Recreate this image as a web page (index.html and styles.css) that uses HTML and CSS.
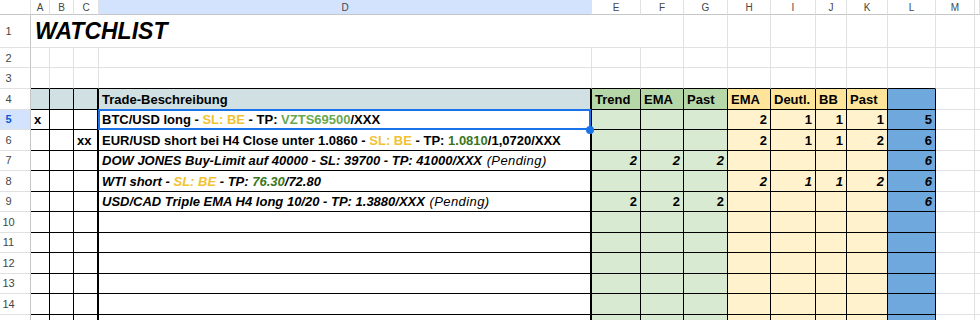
FILE: index.html
```html
<!DOCTYPE html>
<html lang="de">
<head>
<meta charset="utf-8">
<title>Watchlist</title>
<link rel="stylesheet" href="styles.css">
</head>
<body>
<div class="sheet">
  <!-- column headers -->
  <div class="ch"></div>
  <div class="ch">A</div><div class="ch">B</div><div class="ch">C</div><div class="ch ch-sel">D</div>
  <div class="ch">E</div><div class="ch">F</div><div class="ch">G</div><div class="ch">H</div>
  <div class="ch">I</div><div class="ch">J</div><div class="ch">K</div><div class="ch">L</div>
  <div class="ch">M</div><div class="ch"></div>

  <!-- row 1 -->
  <div class="rh">1</div>
  <div class="c title">WATCHLIST</div>
  <div class="c"></div><div class="c"></div><div class="c"></div><div class="c"></div>
  <div class="c"></div><div class="c"></div><div class="c"></div><div class="c"></div>

  <!-- row 2 -->
  <div class="rh">2</div>
  <div class="c"></div><div class="c"></div><div class="c"></div><div class="c"></div>
  <div class="c"></div><div class="c"></div><div class="c"></div><div class="c"></div>
  <div class="c"></div><div class="c"></div><div class="c"></div><div class="c"></div>
  <div class="c"></div><div class="c"></div>

  <!-- row 3 -->
  <div class="rh">3</div>
  <div class="c kb"></div><div class="c kb"></div><div class="c kb"></div><div class="c kb"></div>
  <div class="c kb"></div><div class="c kb"></div><div class="c kb"></div><div class="c kb"></div>
  <div class="c kb"></div><div class="c kb"></div><div class="c kb"></div><div class="c kb"></div>
  <div class="c"></div><div class="c"></div>

  <!-- row 4 -->
  <div class="rh">4</div>
  <div class="c k cy"></div><div class="c k cy"></div><div class="c k cy thick"></div>
  <div class="c k cy thick">Trade-Beschreibung</div>
  <div class="c k gh">Trend</div><div class="c k gh">EMA</div><div class="c k gh">Past</div>
  <div class="c k yh">EMA</div><div class="c k yh">Deutl.</div><div class="c k yh">BB</div><div class="c k yh">Past</div>
  <div class="c k b"></div>
  <div class="c"></div><div class="c"></div>

  <!-- row 5 -->
  <div class="rh rh-sel">5</div>
  <div class="c k">x</div><div class="c k"></div><div class="c k thick"></div>
  <div class="c k thick sel">BTC/USD long - <span class="gold">&nbsp;SL: BE&nbsp;</span> - TP: <span class="lg">&nbsp;VZTS69500</span>/XXX<span class="sel-box"></span><span class="sel-dot"></span></div>
  <div class="c k g"></div><div class="c k g"></div><div class="c k g"></div>
  <div class="c k y num">2</div><div class="c k y num">1</div><div class="c k y num">1</div><div class="c k y num">1</div>
  <div class="c k b num">5</div>
  <div class="c"></div><div class="c"></div>

  <!-- row 6 -->
  <div class="rh">6</div>
  <div class="c k"></div><div class="c k"></div><div class="c k thick">xx</div>
  <div class="c k thick">EUR/USD short bei H4 Close unter 1.0860 - <span class="gold">&nbsp;SL: BE&nbsp;</span> - TP: <span class="dg">&nbsp;1.0810</span>/1,0720/XXX</div>
  <div class="c k g"></div><div class="c k g"></div><div class="c k g"></div>
  <div class="c k y num">2</div><div class="c k y num">1</div><div class="c k y num">1</div><div class="c k y num">2</div>
  <div class="c k b num">6</div>
  <div class="c"></div><div class="c"></div>

  <!-- row 7 -->
  <div class="rh">7</div>
  <div class="c k"></div><div class="c k"></div><div class="c k thick"></div>
  <div class="c k thick it">DOW JONES Buy-Limit auf 40000 - SL: 39700 - TP: 41000/XXX&nbsp;<span class="reg">(Pending)</span></div>
  <div class="c k g num it">2</div><div class="c k g num it">2</div><div class="c k g num it">2</div>
  <div class="c k y"></div><div class="c k y"></div><div class="c k y"></div><div class="c k y"></div>
  <div class="c k b num it">6</div>
  <div class="c"></div><div class="c"></div>

  <!-- row 8 -->
  <div class="rh">8</div>
  <div class="c k"></div><div class="c k"></div><div class="c k thick"></div>
  <div class="c k thick it">WTI short - <span class="gold">&nbsp;SL: BE&nbsp;</span> - TP: <span class="dg">&nbsp;76.30</span>/72.80</div>
  <div class="c k g"></div><div class="c k g"></div><div class="c k g"></div>
  <div class="c k y num it">2</div><div class="c k y num it">1</div><div class="c k y num it">1</div><div class="c k y num it">2</div>
  <div class="c k b num it">6</div>
  <div class="c"></div><div class="c"></div>

  <!-- row 9 -->
  <div class="rh">9</div>
  <div class="c k"></div><div class="c k"></div><div class="c k thick"></div>
  <div class="c k thick it">USD/CAD Triple EMA H4 long 10/20 - TP: 1.3880/XXX&nbsp;<span class="reg">(Pending)</span></div>
  <div class="c k g num">2</div><div class="c k g num">2</div><div class="c k g num">2</div>
  <div class="c k y"></div><div class="c k y"></div><div class="c k y"></div><div class="c k y"></div>
  <div class="c k b num it">6</div>
  <div class="c"></div><div class="c"></div>

  <!-- rows 10-15 -->
  <div class="rh">10</div>
  <div class="c k"></div><div class="c k"></div><div class="c k thick"></div><div class="c k thick"></div>
  <div class="c k g"></div><div class="c k g"></div><div class="c k g"></div>
  <div class="c k y"></div><div class="c k y"></div><div class="c k y"></div><div class="c k y"></div>
  <div class="c k b"></div><div class="c"></div><div class="c"></div>

  <div class="rh">11</div>
  <div class="c k"></div><div class="c k"></div><div class="c k thick"></div><div class="c k thick"></div>
  <div class="c k g"></div><div class="c k g"></div><div class="c k g"></div>
  <div class="c k y"></div><div class="c k y"></div><div class="c k y"></div><div class="c k y"></div>
  <div class="c k b"></div><div class="c"></div><div class="c"></div>

  <div class="rh">12</div>
  <div class="c k"></div><div class="c k"></div><div class="c k thick"></div><div class="c k thick"></div>
  <div class="c k g"></div><div class="c k g"></div><div class="c k g"></div>
  <div class="c k y"></div><div class="c k y"></div><div class="c k y"></div><div class="c k y"></div>
  <div class="c k b"></div><div class="c"></div><div class="c"></div>

  <div class="rh">13</div>
  <div class="c k"></div><div class="c k"></div><div class="c k thick"></div><div class="c k thick"></div>
  <div class="c k g"></div><div class="c k g"></div><div class="c k g"></div>
  <div class="c k y"></div><div class="c k y"></div><div class="c k y"></div><div class="c k y"></div>
  <div class="c k b"></div><div class="c"></div><div class="c"></div>

  <div class="rh">14</div>
  <div class="c k"></div><div class="c k"></div><div class="c k thick"></div><div class="c k thick"></div>
  <div class="c k g"></div><div class="c k g"></div><div class="c k g"></div>
  <div class="c k y"></div><div class="c k y"></div><div class="c k y"></div><div class="c k y"></div>
  <div class="c k b"></div><div class="c"></div><div class="c"></div>

  <div class="rh"></div>
  <div class="c k"></div><div class="c k"></div><div class="c k thick"></div><div class="c k thick"></div>
  <div class="c k g"></div><div class="c k g"></div><div class="c k g"></div>
  <div class="c k y"></div><div class="c k y"></div><div class="c k y"></div><div class="c k y"></div>
  <div class="c k b"></div><div class="c"></div><div class="c"></div>
</div>
</body>
</html>
```

FILE: styles.css
```css
html, body {
  margin: 0;
  padding: 0;
  background: #ffffff;
}

body {
  width: 980px;
  height: 320px;
  overflow: hidden;
  font-family: "Liberation Sans", Arial, sans-serif;
}

.sheet {
  display: grid;
  grid-template-columns: 31px 19px 24px 25px 493px 49px 43px 44px 43px 45px 31px 41px 48px 39px 5px;
  grid-template-rows: 15px 33px 20px 20.5px 21px repeat(11, 20.5px);
}

.sheet > div {
  box-sizing: border-box;
  white-space: nowrap;
  overflow: hidden;
  display: flex;
  align-items: center;
}

/* column headers */
.ch {
  justify-content: center;
  border-right: 1px solid #e1e1e1;
  border-bottom: 1px solid #c4c7c5;
  font-size: 10px;
  color: #444746;
  padding-top: 1px;
}

.ch-sel {
  background: #d3e3fd;
}

/* row headers */
.rh {
  justify-content: center;
  padding-right: 13px;
  border-right: 1px solid #c4c7c5;
  border-bottom: 1px solid #e1e1e1;
  font-size: 11px;
  color: #444746;
}

.rh-sel {
  background: #d3e3fd;
  color: #0b57d0;
  font-weight: bold;
}

/* cells */
.c {
  border-right: 1px solid #e1e1e1;
  border-bottom: 1px solid #e1e1e1;
  padding: 1px 3px 0 3px;
  font-size: 13px;
  font-weight: bold;
  color: #000000;
}

.title {
  grid-column: span 6;
  font-size: 23px;
  font-style: italic;
  padding-left: 4px;
}

.kb {
  border-bottom-color: #000000;
}

.k {
  border-right-color: #000000;
  border-bottom-color: #000000;
}

.thick {
  border-right-width: 2px;
}

.num {
  justify-content: flex-end;
}

.it {
  font-style: italic;
}

.reg {
  font-weight: normal;
  letter-spacing: 0.4px;
  padding-left: 1px;
}

/* fills */
.cy { background: #d0e0e3; }
.gh { background: #b6d7a8; }
.yh { background: #ffe599; }
.g  { background: #d9ead3; }
.y  { background: #fff2cc; }
.b  { background: #6fa8dc; }

/* text colours */
.gold { color: #f1c232; }
.lg { color: #6aa84f; }
.dg { color: #38761d; }

/* selection */
.sel {
  position: relative;
  overflow: visible !important;
}

.sel-box {
  position: absolute;
  left: -1px;
  top: -1px;
  right: -1px;
  bottom: -1px;
  border: 2px solid #1a73e8;
}

.sel-dot {
  position: absolute;
  right: -4px;
  bottom: -4.5px;
  width: 8px;
  height: 8px;
  border-radius: 50%;
  background: #1a73e8;
}
```
